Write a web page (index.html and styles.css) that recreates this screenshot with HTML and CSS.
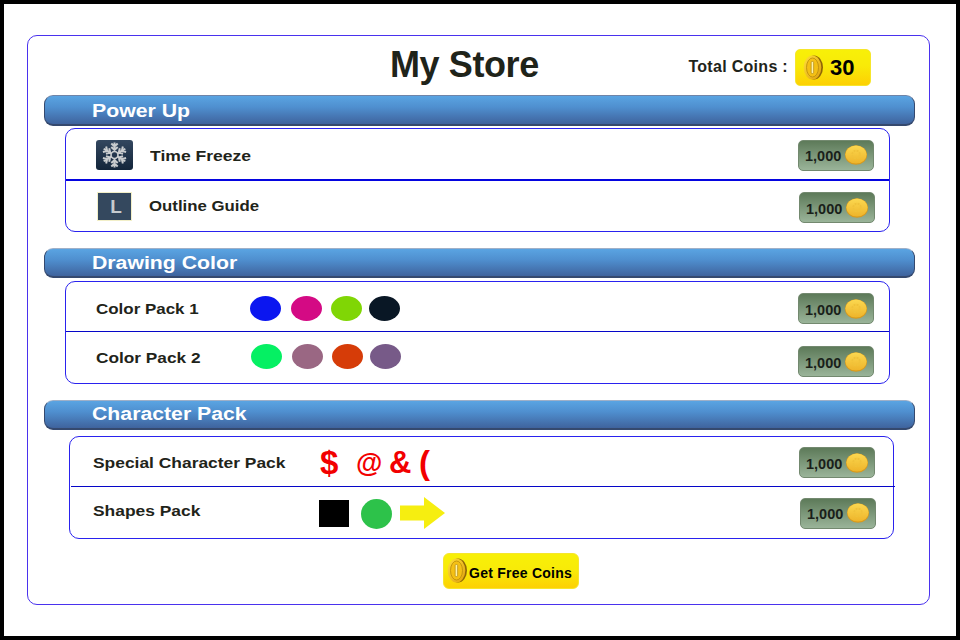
FILE: index.html
```html
<!DOCTYPE html>
<html>
<head>
	<title>My Store</title>
	<link rel="stylesheet" href="styles.css">
</head>
<body>
	<svg class="defs" width="0" height="0">
		<defs>
			<linearGradient id="goldface" x1="0" y1="0" x2="1" y2="1">
				<stop offset="0" stop-color="#ffdf3a"/>
				<stop offset="1" stop-color="#e0a00e"/>
			</linearGradient>
			<linearGradient id="smallface" x1="0" y1="0" x2="0" y2="1">
				<stop offset="0" stop-color="#fbd850"/>
				<stop offset="1" stop-color="#eeb42a"/>
			</linearGradient>
			<symbol id="bigcoin" viewBox="0 0 20 25">
				<ellipse cx="11" cy="12.500" rx="9" ry="12" fill="#8f6606"/>
				<ellipse cx="9.500" cy="12.500" rx="8.800" ry="12" fill="url(#goldface)"/>
				<ellipse cx="9.500" cy="12.500" rx="6" ry="9.500" fill="#f4c014" stroke="#b98a0c" stroke-width="0.800"/>
				<rect x="8.200" y="6.500" width="2.400" height="12" rx="1" fill="#fff3a8" stroke="#a87c08" stroke-width="0.600"/>
			</symbol>
			<symbol id="smallcoin" viewBox="0 0 22 20">
				<ellipse cx="11" cy="10" rx="11" ry="9.800" fill="#d89a1c"/>
				<ellipse cx="11" cy="9.600" rx="10.600" ry="9" fill="url(#smallface)"/>
				<circle cx="11" cy="9.500" r="3.800" fill="none" stroke="#f0c23a" stroke-width="1.800" stroke-dasharray="2 1"/>
			</symbol>
			<g id="flakearm">
				<path d="M0 -3V-12.500M-3.200 -11.500L0 -8.500L3.200 -11.500M-3.200 -8L0 -5L3.200 -8" fill="none" stroke="#c9ccce" stroke-width="2"/>
			</g>
		</defs>
	</svg>
	<div class="screen">
		<div class="store">
			<div class="header">
				<h1 class="title">My Store</h1>
				<span class="total-label">Total Coins :</span>
				<div class="total-badge">
					<svg class="bigcoin"><use href="#bigcoin"/></svg>
					<span>30</span>
				</div>
			</div>

			<h2 class="bar bar-first"><span class="bar-text">Power Up</span></h2>
			<div class="panel">
				<div class="row row-freeze">
					<div class="icon-freeze">
						<svg width="37" height="30" viewBox="-18.5 -15 37 30">
							<use href="#flakearm"/>
							<use href="#flakearm" transform="rotate(60)"/>
							<use href="#flakearm" transform="rotate(120)"/>
							<use href="#flakearm" transform="rotate(180)"/>
							<use href="#flakearm" transform="rotate(240)"/>
							<use href="#flakearm" transform="rotate(300)"/>
							<circle r="3.500" fill="none" stroke="#c9ccce" stroke-width="1.700"/>
						</svg>
					</div>
					<span class="name name-freeze">Time Freeze</span>
					<div class="price price-freeze">1,000<svg class="smallcoin"><use href="#smallcoin"/></svg></div>
				</div>
				<div class="row row-outline">
					<div class="icon-outline">L</div>
					<span class="name name-outline">Outline Guide</span>
					<div class="price price-low">1,000<svg class="smallcoin"><use href="#smallcoin"/></svg></div>
				</div>
			</div>

			<h2 class="bar bar-draw"><span class="bar-text">Drawing Color</span></h2>
			<div class="panel panel-color">
				<div class="row row-thin">
					<span class="name name-color name-color1">Color Pack 1</span>
					<div class="dots dots-first">
						<i class="dot dot-wide" style="background:#0b16f0"></i>
						<i class="dot dot-mid" style="background:#d40a84"></i>
						<i class="dot dot-tight" style="background:#80d605"></i>
						<i class="dot" style="background:#091725"></i>
					</div>
					<div class="price price-color1">1,000<svg class="smallcoin"><use href="#smallcoin"/></svg></div>
				</div>
				<div class="row row-color2">
					<span class="name name-color name-color2">Color Pack 2</span>
					<div class="dots dots-second">
						<i class="dot dot-wide" style="background:#05f063"></i>
						<i class="dot dot-mid" style="background:#9a6783"></i>
						<i class="dot dot-tight" style="background:#d63c08"></i>
						<i class="dot" style="background:#775a88"></i>
					</div>
					<div class="price price-color2">1,000<svg class="smallcoin"><use href="#smallcoin"/></svg></div>
				</div>
			</div>

			<h2 class="bar"><span class="bar-text">Character Pack</span></h2>
			<div class="panel panel-char">
				<div class="row row-special">
					<span class="name name-special">Special Character Pack</span>
					<div class="chars"><span>$</span><span>@</span><span>&amp;</span><span>(</span></div>
					<div class="price price-special">1,000<svg class="smallcoin"><use href="#smallcoin"/></svg></div>
				</div>
				<div class="row row-shapes">
					<span class="name name-shapes">Shapes Pack</span>
					<div class="shapes">
						<div class="shape-square"></div>
						<div class="shape-circle"></div>
						<svg width="45" height="32" viewBox="0 0 45 32"><path d="M0 8.500H24V0L45 16L24 32V23.500H0Z" fill="#f6ee10"/></svg>
					</div>
					<div class="price price-shapes">1,000<svg class="smallcoin"><use href="#smallcoin"/></svg></div>
				</div>
			</div>

			<div class="free-wrap">
				<div class="free-btn">
					<svg class="freecoin"><use href="#bigcoin"/></svg>
					<span class="free-text">Get Free Coins</span>
				</div>
			</div>
		</div>
	</div>
</body>
</html>
```
FILE: styles.css
```css
* {
	box-sizing: border-box;
}

body {
	margin: 0;
	font-family: "Liberation Sans", Arial, sans-serif;
	color: #1f241a;
}

.defs {
	position: absolute;
}

.screen {
	width: 960px;
	height: 640px;
	background: #fff;
	border: solid #000;
	border-width: 4px;
	padding: 31px 26px 0 23px;
}

.store {
	width: 903px;
	height: 570px;
	border: 1px solid #4a32ee;
	border-radius: 10px;
}

.header {
	display: flex;
	align-items: center;
	height: 59px;
	padding-top: 4px;
}

.title {
	margin: -6px 0 0 362px;
	font-size: 36px;
	font-weight: bold;
	letter-spacing: -0.4px;
	line-height: 50px;
}

.total-label {
	margin-left: auto;
	margin-right: 7px;
	margin-top: -2px;
	font-size: 16px;
	font-weight: bold;
	letter-spacing: 0.3px;
}

.total-badge {
	display: flex;
	align-items: center;
	width: 76px;
	height: 37px;
	margin-right: 58px;
	padding-left: 7px;
	border-radius: 5px;
	border: 1px solid #f6e62c;
	background: linear-gradient(#f8f008 0%, #f8ea08 45%, #fdd004 100%);
	color: #000;
	font-size: 22px;
	font-weight: bold;
}

.bigcoin {
	width: 20px;
	height: 25px;
	margin-right: 7px;
}

.bar {
	width: 871px;
	height: 30px;
	margin: 16px 0 0 16px;
	padding-left: 47px;
	border: 1px solid #35496e;
	border-top-color: #9fb0c8;
	border-bottom-width: 2px;
	border-radius: 9px;
	background: linear-gradient(#5aa4e2 0%, #4f8fcf 40%, #3f639d 100%);
	color: #fff;
	font-size: 18px;
	font-weight: bold;
	line-height: 27px;
}

.bar-first {
	height: 31px;
	margin-top: 0;
	border-top-color: #6f84a8;
	line-height: 31px;
}

.bar-draw {
	line-height: 29px;
}

.bar-text {
	display: inline-block;
	transform: scaleX(1.18);
	transform-origin: left;
}

.panel {
	width: 825px;
	height: 104px;
	margin: 2px 0 0 37px;
	border: 1px solid #2a22ee;
	border-radius: 10px;
}

.panel-color {
	height: 103px;
	margin-top: 3px;
}

.panel-char {
	height: 103px;
	margin: 6px 0 0 41px;
}

.row {
	display: flex;
	align-items: center;
}

.row-freeze {
	height: 52px;
	padding-left: 30px;
	border-bottom: 2px solid #0404e0;
}

.row-outline {
	height: 50px;
	padding-left: 31px;
}

.row-thin {
	height: 50px;
	padding-left: 30px;
	border-bottom: 1px solid #0606c8;
}

.row-color2 {
	height: 51px;
	padding-left: 30px;
}

.row-special {
	height: 50px;
	width: 824px;
	margin-left: 1px;
	padding-left: 22px;
	border-bottom: 1px solid #0606c8;
}

.row-shapes {
	height: 51px;
	padding-left: 23px;
}

.name {
	font-size: 15px;
	font-weight: bold;
	transform-origin: left;
}

.name-freeze {
	margin: 2px 0 0 17px;
	transform: scaleX(1.17);
}

.name-outline {
	margin-left: 17px;
	margin-top: -1px;
	transform: scaleX(1.12);
}

.name-color {
	width: 154px;
	transform: scaleX(1.13);
}

.name-color1 {
	margin-top: 4px;
}

.name-color2 {
	transform: scaleX(1.15);
}

.name-special {
	width: 226px;
	margin-top: 1px;
	transform: scaleX(1.16);
}

.name-shapes {
	width: 226px;
	margin-top: -5px;
	transform: scaleX(1.16);
}

.icon-freeze {
	display: flex;
	width: 37px;
	height: 30px;
	margin-top: 2px;
	border-radius: 3px;
	background: linear-gradient(#33475f, #13253a);
}

.icon-outline {
	width: 35px;
	height: 29px;
	padding-left: 3px;
	border: 1px solid #f2efc8;
	background: #34485e;
	color: #c6cbce;
	font-size: 19px;
	font-weight: bold;
	line-height: 27px;
	text-align: center;
}

.price {
	display: flex;
	align-items: center;
	width: 76px;
	height: 31px;
	margin-left: auto;
	margin-right: 15px;
	padding: 2px 0 0 6px;
	border: 1px solid #73896f;
	border-radius: 5px;
	background: linear-gradient(#5d7a59 0%, #9ab499 100%);
	color: #1a1f1a;
	font-size: 14.500px;
	font-weight: bold;
	white-space: nowrap;
}

.price-freeze {
	margin-top: 2px;
}

.price-low {
	margin-right: 14px;
	margin-top: 3px;
}

.price-color1 {
	margin-top: 4px;
}

.price-color2 {
	margin-top: 8px;
}

.price-special {
	margin-right: 20px;
	margin-top: 2px;
}

.price-shapes {
	margin-right: 17px;
	margin-top: 1px;
}

.smallcoin {
	width: 22px;
	height: 20px;
	margin-left: 4px;
	margin-top: -2px;
}

.dots {
	display: flex;
	align-items: center;
}

.dots-first {
	margin-top: 4px;
}

.dots-second {
	margin-left: 1px;
	margin-top: -2px;
}

.dot {
	display: block;
	width: 31px;
	height: 25px;
	border-radius: 50%;
}

.dot-wide {
	margin-right: 10px;
}

.dot-mid {
	margin-right: 9px;
}

.dot-tight {
	margin-right: 7px;
}

.chars {
	display: flex;
	margin: 2px 0 0 1px;
	color: #f20000;
	font-size: 33px;
	font-weight: bold;
	line-height: 40px;
}

.chars span:nth-child(1) {
	width: 36px;
}

.chars span:nth-child(2) {
	width: 33px;
	font-size: 27px;
}

.chars span:nth-child(3) {
	width: 30px;
	font-size: 31px;
}

.shapes {
	display: flex;
	align-items: center;
}

.shape-square {
	width: 30px;
	height: 27px;
	margin-top: 2px;
	background: #000;
}

.shape-circle {
	width: 31px;
	height: 30px;
	margin: 2px 8px 0 12px;
	border-radius: 50%;
	background: #2dc24a;
}

.free-wrap {
	display: flex;
	margin: 14px 0 0 415px;
}

.free-btn {
	display: flex;
	align-items: center;
	width: 136px;
	height: 36px;
	padding-left: 3px;
	border-radius: 6px;
	border: 1px solid #f6e62c;
	background: linear-gradient(#f8f008 0%, #f8ea08 50%, #fdd004 100%);
	color: #000;
	font-size: 14px;
	font-weight: bold;
	white-space: nowrap;
}

.free-text {
	margin-top: 4px;
	letter-spacing: 0.25px;
}

.freecoin {
	width: 20px;
	height: 25px;
	margin-right: 2px;
	margin-top: -1px;
}
```
